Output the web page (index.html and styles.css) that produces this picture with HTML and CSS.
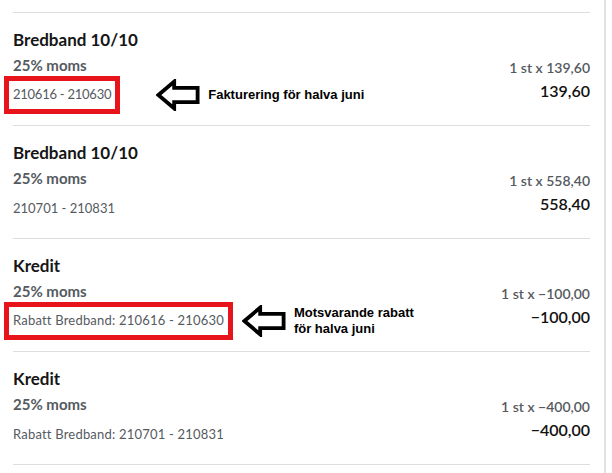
FILE: index.html
```html
<!DOCTYPE html>
<html lang="sv">
<head>
<meta charset="UTF-8" />
<meta name="viewport" content="width=device-width, initial-scale=1" />
<title>Fakturarader</title>
<link rel="stylesheet" href="styles.css">
</head>
<body>

<div class="page">
  <div class="rows">

    <div class="item">
      <div class="item-left">
        <div class="item-title">Bredband 10/10</div>
        <div class="item-vat">25% moms</div>
        <div class="item-sub">
          <span class="mark mark-tight">210616 - 210630</span>
          <svg class="arrow arrow-far" viewBox="0 0 46 33" width="44" height="32">
            <path d="M2.5 16.5 L19 2.5 L19 9 L43.5 9 L43.5 24 L19 24 L19 30.5 Z" />
          </svg>
          <span class="note">Fakturering för halva juni</span>
        </div>
      </div>
      <div class="item-right">
        <div class="item-qty">1 st x 139,60</div>
        <div class="item-sum">139,60</div>
      </div>
    </div>

    <div class="item">
      <div class="item-left">
        <div class="item-title">Bredband 10/10</div>
        <div class="item-vat">25% moms</div>
        <div class="item-sub">210701 - 210831</div>
      </div>
      <div class="item-right">
        <div class="item-qty">1 st x 558,40</div>
        <div class="item-sum">558,40</div>
      </div>
    </div>

    <div class="item">
      <div class="item-left">
        <div class="item-title">Kredit</div>
        <div class="item-vat">25% moms</div>
        <div class="item-sub">
          <span class="mark mark-wide">Rabatt Bredband: 210616 - 210630</span>
          <svg class="arrow arrow-near" viewBox="0 0 46 33" width="44" height="32">
            <path d="M2.5 16.5 L19 2.5 L19 9 L43.5 9 L43.5 24 L19 24 L19 30.5 Z" />
          </svg>
          <span class="note">Motsvarande rabatt<br>för halva juni</span>
        </div>
      </div>
      <div class="item-right">
        <div class="item-qty">1 st x &minus;100,00</div>
        <div class="item-sum">&minus;100,00</div>
      </div>
    </div>

    <div class="item item-last">
      <div class="item-left">
        <div class="item-title">Kredit</div>
        <div class="item-vat">25% moms</div>
        <div class="item-sub item-sub-wide">Rabatt Bredband: 210701 - 210831</div>
      </div>
      <div class="item-right">
        <div class="item-qty">1 st x &minus;400,00</div>
        <div class="item-sum">&minus;400,00</div>
      </div>
    </div>

  </div>
</div>

</body>
</html>
```

FILE: styles.css
```css
body {
  margin: 0;
  background: #fff;
  font-family: "Lato", "Noto Sans", sans-serif;
  color: #1a1a1a;
}
.page {
  width: 604px;
  height: 461px;
  border-right: 2px solid #e2e2e2;
  padding-top: 12px;
}
.rows {
  margin-left: 13px;
  width: 577px;
}
.item {
  display: flex;
  justify-content: space-between;
  align-items: flex-start;
  height: 113px;
  box-sizing: border-box;
  border-top: 1px solid #dedede;
  padding-top: 16px;
}
.item-last {
  height: 114px;
  border-bottom: 1px solid #dedede;
}
.item-title {
  font-size: 17px;
  font-weight: bold;
  line-height: 22px;
  color: #161616;
}
.item-vat {
  font-size: 15px;
  font-weight: bold;
  line-height: 18px;
  margin-top: 5px;
  color: #555a60;
}
.item-sub {
  display: flex;
  align-items: center;
  font-size: 13px;
  line-height: 18px;
  height: 18px;
  margin-top: 12px;
  color: #555a60;
}
.item-sub-wide {
  letter-spacing: 0.2px;
}
.item-right {
  margin-top: 30px;
  text-align: right;
}
.item-qty {
  font-size: 14px;
  line-height: 18px;
  color: #555a60;
  font-weight: 600;
}
.item-sum {
  font-size: 16px;
  line-height: 20px;
  margin-top: 4px;
  font-weight: 600;
  color: #111;
}

/* annotations */
.mark {
  border: 5px solid #e8141c;
  margin-left: -9px;
  padding: 7px 4px 8px 4px;
  line-height: 13px;
  white-space: nowrap;
}
.mark-tight {
  letter-spacing: -0.25px;
}
.mark-wide {
  letter-spacing: 0.2px;
}
.arrow {
  flex: none;
}
.arrow path {
  fill: #fff;
  stroke: #000;
  stroke-width: 4;
}
.arrow-far {
  margin-left: 36px;
}
.arrow-near {
  margin-left: 9px;
}
.note {
  font-family: "Liberation Sans", Arial, sans-serif;
  font-weight: bold;
  font-size: 13px;
  line-height: 16px;
  color: #000;
  margin-left: 8px;
  white-space: nowrap;
}
```
